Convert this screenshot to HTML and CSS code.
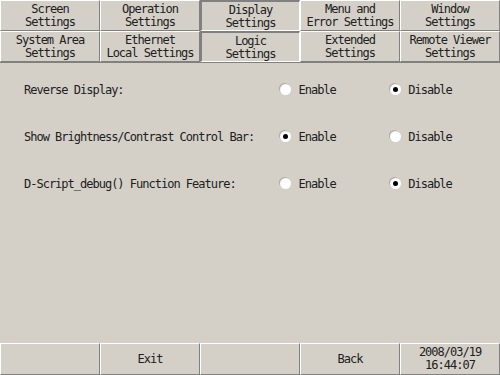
FILE: index.html
```html
<!DOCTYPE html>
<html lang="en">
  <head>
    <meta charset="UTF-8" />
    <title>Display Settings</title>
    <link rel="stylesheet" href="styles.css">
  </head>
  <body>
    <div class="screen">
      <!-- Tab menu -->
      <div class="tabs">
        <div class="tab">Screen<br />Settings</div>
        <div class="tab">Operation<br />Settings</div>
        <div class="tab active">Display<br />Settings</div>
        <div class="tab">Menu and<br />Error Settings</div>
        <div class="tab">Window<br />Settings</div>
        <div class="tab">System Area<br />Settings</div>
        <div class="tab">Ethernet<br />Local Settings</div>
        <div class="tab active">Logic<br />Settings</div>
        <div class="tab">Extended<br />Settings</div>
        <div class="tab">Remote Viewer<br />Settings</div>
      </div>

      <!-- Options -->
      <div class="content">
        <div class="row">
          <span class="label">Reverse Display:</span>
          <span class="opt"><i class="radio"></i>Enable</span>
          <span class="opt"><i class="radio on"></i>Disable</span>
        </div>
        <div class="row">
          <span class="label">Show Brightness/Contrast Control Bar:</span>
          <span class="opt"><i class="radio on"></i>Enable</span>
          <span class="opt"><i class="radio"></i>Disable</span>
        </div>
        <div class="row">
          <span class="label">D-Script_debug() Function Feature:</span>
          <span class="opt"><i class="radio"></i>Enable</span>
          <span class="opt"><i class="radio on"></i>Disable</span>
        </div>
      </div>

      <!-- Bottom bar -->
      <div class="footer">
        <div class="btn"></div>
        <div class="btn">Exit</div>
        <div class="btn"></div>
        <div class="btn">Back</div>
        <div class="btn clock">2008/03/19<br />16:44:07</div>
      </div>
    </div>
  </body>
</html>
```

FILE: styles.css
```css
* {
  margin: 0;
  padding: 0;
  box-sizing: border-box;
}

body {
  font-family: "DejaVu Sans Mono", "Liberation Mono", monospace;
  font-size: 12px;
  letter-spacing: -1px;
  color: #202020;
  background: #d4d0c8;
  width: 500px;
  height: 375px;
  overflow: hidden;
}

.screen {
  height: 375px;
  display: flex;
  flex-direction: column;
}

.tabs {
  display: grid;
  grid-template-columns: repeat(5, 100px);
  grid-template-rows: 31px 31px;
  gap: 0;
  border-bottom: 1px solid #808080;
}

.tab,
.btn {
  display: flex;
  align-items: center;
  justify-content: center;
  text-align: center;
  line-height: 13px;
  border: 1px solid;
  border-color: #ffffff #808080 #808080 #ffffff;
  background: #d4d0c8;
}

.tab.active {
  border-width: 2px 1px 1px 2px;
  border-color: #808080 #ffffff #ffffff #808080;
  padding-top: 1px;
}

.content {
  flex: 1;
  padding-top: 3px;
}

.row {
  height: 47px;
  display: flex;
  align-items: center;
  padding-left: 24px;
}

.label {
  width: 257px;
}

.opt {
  width: 110px;
  display: flex;
  align-items: center;
}

.radio {
  display: inline-block;
  width: 11px;
  height: 11px;
  border-radius: 50%;
  margin-right: 7px;
  background: radial-gradient(circle at 60% 60%, #ffffff 55%, #d8d8d8 100%);
  box-shadow: -1px -1px 0 #b0aca6;
  position: relative;
}

.radio.on::after {
  content: "";
  position: absolute;
  left: 3px;
  top: 3px;
  width: 5px;
  height: 5px;
  border-radius: 50%;
  background: #000;
}

.footer {
  display: grid;
  grid-template-columns: repeat(5, 100px);
  height: 32px;
}

.clock {
  line-height: 13px;
  padding-bottom: 1px;
}
```
